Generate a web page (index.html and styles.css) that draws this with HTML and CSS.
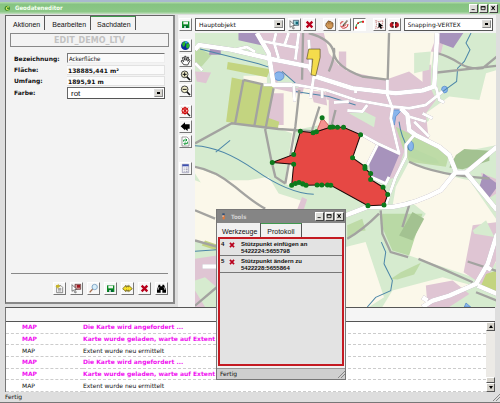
FILE: index.html
```html
<!DOCTYPE html>
<html lang="de">
<head>
<meta charset="utf-8">
<title>Geodateneditor</title>
<link rel="stylesheet" href="styles.css">
</head>
<body>
<svg class="defs" aria-hidden="true">
  <symbol id="i-save" viewBox="0 0 33 33"><path fill="#0a8a22" d="M6 7h22v20H6z"/><path fill="#eef5ee" d="M10 8h14v8H10z"/><path fill="#063" d="M10 20h14v7H10z"/><path fill="#fff" d="M13 21h4v6h-4z"/></symbol>
  <symbol id="i-cross" viewBox="0 0 33 33"><path stroke="#b8001c" stroke-width="7" d="M8 8L25 25M25 8L8 25"/></symbol>
  <symbol id="i-globe" viewBox="0 0 33 33"><circle cx="16" cy="17" r="13" fill="#0b2b9a"/><path fill="#26b52a" d="M6 11q6-8 13-7l-3 7-2 7-5 3zM19 12l7-3 3 8-5 9-6-4z"/><path fill="#39b8e8" d="M14 5l5-1 5 3-6 4z"/></symbol>
  <symbol id="i-hand" viewBox="0 0 33 33"><path fill="#fff" stroke="#222" stroke-width="2.5" d="M11 29L3 18l3-2 5 4-4-12 4-1 4 9-1-12h4l1 12 4-10 3 1-3 12 5-6 2 3-7 14z"/></symbol>
  <symbol id="i-zin" viewBox="0 0 33 33"><path stroke="#111" stroke-width="5" d="M20 20l10 10"/><circle cx="14" cy="13" r="10" fill="#f2eecb" stroke="#222" stroke-width="2.5"/><path stroke="#111" stroke-width="3" d="M8 13h12M14 7v12"/></symbol>
  <symbol id="i-zout" viewBox="0 0 33 33"><path stroke="#111" stroke-width="5" d="M20 20l10 10"/><circle cx="14" cy="13" r="10" fill="#f2eecb" stroke="#222" stroke-width="2.5"/><path stroke="#111" stroke-width="3" d="M8 13h12"/></symbol>
  <symbol id="i-zall" viewBox="0 0 33 33"><path stroke="#222" stroke-width="4" d="M21 21l9 9"/><circle cx="15" cy="14" r="9" fill="#f3bcbc" stroke="#c00" stroke-width="3"/><path stroke="#c00" stroke-width="3" d="M6 5l18 18M24 5L6 23M15 2v24"/></symbol>
  <symbol id="i-back" viewBox="0 0 33 33"><path d="M2 16L15 4v6h14v13h-6v7l-8-6v4z"/></symbol>
  <symbol id="i-refresh" viewBox="0 0 33 33"><path fill="#fff" stroke="#777" stroke-width="2" d="M6 3h15l6 6v21H6z"/><path fill="none" stroke="#159a38" stroke-width="3" d="M11 17v-5h9M17 8l4 4-4 4M22 17v6h-9M16 19l-4 4 4 4"/></symbol>
  <symbol id="i-list" viewBox="0 0 33 33"><path fill="#fff" stroke="#8888a8" stroke-width="2" d="M7 4h19v25H7z"/><path fill="#3d4fae" d="M7 4h19v6H7z"/><path stroke="#668" stroke-width="2" d="M11 15h3M17 15h6M11 20h3M17 20h6M11 25h3M17 25h6"/></symbol>
  <symbol id="i-pick" viewBox="0 0 33 33"><path fill="#9fd5dc" stroke="#345" stroke-width="2" d="M13 4h16v15H13z"/><path fill="#167" d="M20 8h7v8h-7z"/><path stroke="#111" stroke-width="1.5" fill="#fff" d="M3 5l14 14-6 1 5 8-4 2-4-9-5 4z"/></symbol>
  <symbol id="i-pickred" viewBox="0 0 33 33"><path fill="#c99" stroke="#522" stroke-width="2" d="M12 4h17v15H12z"/><path fill="#a01820" d="M18 6h9v8h-9z"/><path stroke="#111" stroke-width="1.5" fill="#fff" d="M3 5l14 14-6 1 5 8-4 2-4-9-5 4z"/></symbol>
  <symbol id="i-grab" viewBox="0 0 33 33"><path fill="#d29a58" stroke="#593311" stroke-width="2" d="M7 12l4-2 1-4h4l1 3 3-2 3 3 4 2v10l-5 7H12L5 20z"/><path stroke="#593311" d="M13 10v6M18 10v6M23 11v5"/></symbol>
  <symbol id="i-pen" viewBox="0 0 33 33"><path fill="none" stroke="#d23030" stroke-width="3" d="M5 16q-2-9 8-8M5 20q3 10 13 7t9-12M8 22q8 2 14-6"/><path stroke="#222" stroke-width="4" d="M12 20L25 5"/><path stroke="#f0d8a0" stroke-width="2" d="M14 18L25 5"/></symbol>
  <symbol id="i-arc" viewBox="0 0 33 33"><path fill="none" stroke="#128a26" stroke-width="3" d="M6 26Q6 9 26 8"/><path fill="#d22" d="M3 23h6v6H3zM24 5h6v6h-6zM10 10h5v5h-5z"/></symbol>
  <symbol id="i-area" viewBox="0 0 33 33"><path fill="#fff" stroke="#a44" stroke-width="2" stroke-dasharray="4 2" d="M5 5l10 3 12-3-3 12 3 10-11-2-11 3 3-12z"/><path d="M14 10l13 11-6 1 3 6-4 2-3-7-4 4z"/></symbol>
  <symbol id="i-snap" viewBox="0 0 33 33"><path fill="#b81522" d="M13 9v17H8q-6-2-6-8t6-9zM18 9h5q7 2 7 9t-7 8h-5z"/><path fill="#222" d="M10 9h4v5h-4zM18 9h4v5h-4zM10 21h4v5h-4zM18 21h4v5h-4z"/></symbol>
  <symbol id="i-new" viewBox="0 0 33 33"><path fill="#fff" stroke="#555" stroke-width="2" d="M8 8h13l5 5v16H8z"/><path stroke="#666" stroke-width="2" d="M12 16h10M12 20h10M12 24h10"/><path fill="#c9b520" d="M5 5l5 2 3-5 2 6 5 2-6 3-2 5-3-5-5-1 3-3z"/></symbol>
  <symbol id="i-find" viewBox="0 0 33 33"><path stroke="#a9704e" stroke-width="4" d="M5 28l9-10"/><circle cx="20" cy="12" r="8" fill="#d8effa" stroke="#87a9c8" stroke-width="3"/></symbol>
  <symbol id="i-swap" viewBox="0 0 33 33"><path fill="#f6df2d" stroke="#554900" stroke-width="2" d="M2 17L12 7v5h3V8l5 4V7l11 10-11 9v-5l-5 4v-4h-3v5z"/></symbol>
  <symbol id="i-bino" viewBox="0 0 33 33"><path d="M8 5h5v5h6V5h5l6 15v9H19v-8h-5v8H3v-9z"/><path stroke="#eee" stroke-width="2" d="M9 12l-3 9M24 12l3 9"/></symbol>
  <symbol id="w-min" viewBox="0 0 9 8"><path d="M2 5h4v1H2z"/></symbol>
  <symbol id="w-max" viewBox="0 0 9 8"><path fill="none" stroke="#000" d="M1.500 1.500h5v4h-5zM1 2h6"/></symbol>
  <symbol id="w-close" viewBox="0 0 9 8"><path stroke="#000" stroke-width="1.300" d="M2 1l4 5M6 1l-4 5"/></symbol>
</svg>

<header class="titlebar">
  <svg class="logo" viewBox="0 0 21 21" aria-hidden="true"><circle cx="10" cy="10" r="8" fill="#3d8d2c"/><path fill="none" stroke="#e9f56a" stroke-width="3" d="M15 6Q9 3 7 9t7 6"/></svg>
  <h1>Geodateneditor</h1>
  <div class="winbtns">
    <button aria-label="Minimieren"><svg><use href="#w-min"/></svg></button>
    <button aria-label="Maximieren"><svg><use href="#w-max"/></svg></button>
    <button aria-label="Schließen"><svg><use href="#w-close"/></svg></button>
  </div>
</header>

<main class="work">
  <section class="panel">
    <nav class="tabs">
      <button>Aktionen</button><button>Bearbeiten</button><button class="active">Sachdaten</button>
    </nav>
    <h2>EDIT_DEMO_LTV</h2>
    <form class="form">
      <label for="bez">Bezeichnung:</label><input id="bez" class="edit" value="Ackerfläche">
      <label for="fl">Fläche:</label><input id="fl" value="138885,441 m²" readonly>
      <label for="um">Umfang:</label><input id="um" value="1895,91 m" readonly>
      <label for="fa">Farbe:</label>
      <span class="combo tall"><select id="fa"><option>rot</option></select><i></i></span>
    </form>
    <div class="actions">
      <button class="tool" aria-label="Neu"><svg><use href="#i-new"/></svg></button>
      <button class="tool" aria-label="Auswählen"><svg><use href="#i-pickred"/></svg></button>
      <button class="tool" aria-label="Lupe"><svg><use href="#i-find"/></svg></button>
      <button class="tool" aria-label="Speichern"><svg><use href="#i-save"/></svg></button>
      <button class="tool" aria-label="Übertragen"><svg><use href="#i-swap"/></svg></button>
      <button class="tool" aria-label="Löschen"><svg><use href="#i-cross"/></svg></button>
      <button class="tool" aria-label="Suchen"><svg><use href="#i-bino"/></svg></button>
    </div>
  </section>

  <section class="mapside">
    <div class="toolbar">
      <button class="tool" aria-label="Karte speichern"><svg><use href="#i-save"/></svg></button>
      <span class="combo"><select aria-label="Objekt"><option>Hauptobjekt</option></select><i></i></span>
      <div class="group">
        <button class="tool" aria-label="Objekt wählen"><svg><use href="#i-pick"/></svg></button>
        <button class="tool" aria-label="Objekt löschen"><svg><use href="#i-cross"/></svg></button>
      </div>
      <div class="group">
        <button class="tool" aria-label="Verschieben"><svg><use href="#i-grab"/></svg></button>
        <button class="tool" aria-label="Zeichnen"><svg><use href="#i-pen"/></svg></button>
        <button class="tool pressed" aria-label="Stützpunkte"><svg><use href="#i-arc"/></svg></button>
      </div>
      <div class="group end">
        <button class="tool" aria-label="Fläche wählen"><svg><use href="#i-area"/></svg></button>
        <button class="tool" aria-label="Snapping"><svg><use href="#i-snap"/></svg></button>
      </div>
      <span class="combo"><select aria-label="Snapping-Modus"><option>Snapping-VERTEX</option></select><i></i></span>
    </div>
    <div class="mapbody">
      <div class="side">
        <div class="stack">
          <button class="tool" aria-label="Gesamtansicht"><svg><use href="#i-globe"/></svg></button>
          <button class="tool" aria-label="Schieben"><svg><use href="#i-hand"/></svg></button>
          <button class="tool" aria-label="Vergrößern"><svg><use href="#i-zin"/></svg></button>
          <button class="tool" aria-label="Verkleinern"><svg><use href="#i-zout"/></svg></button>
        </div>
        <div class="stack">
          <button class="tool" aria-label="Auf Objekt zoomen"><svg><use href="#i-zall"/></svg></button>
          <button class="tool" aria-label="Zurück"><svg><use href="#i-back"/></svg></button>
          <button class="tool" aria-label="Aktualisieren"><svg><use href="#i-refresh"/></svg></button>
        </div>
        <div class="stack last">
          <button class="tool" aria-label="Legende"><svg><use href="#i-list"/></svg></button>
        </div>
      </div>
      <div class="mapview">
      <svg class="map" viewBox="0 0 903 819" preserveAspectRatio="xMinYMin slice" role="img" aria-label="Karte">
        <path fill="#d6ebcf" d="M0 0h903v819H0z"/>
        <g fill="#fbf8ea">
          <path d="M380 0H720L700 150 560 140 460 140 400 60z"/>
          <path d="M235 165L400 175 400 270 300 290 290 460 268 450 290 300 245 285z"/>
          <path d="M690 240L760 190 850 200 870 120 903 110V350L800 355 770 400 740 350 660 300 700 260z"/>
          <path d="M640 385Q760 430 820 440L903 560V680L860 740 640 665 610 650 690 540 640 500 590 520 600 460z"/>
          <path d="M475 300L545 330 515 400 470 370zM145 128h70v22h-70z"/>
          <path d="M160 440L220 430 250 480 330 505 310 530H70L0 420V400L100 440z"/>
          <path d="M0 440L80 470 130 530 65 530V640L0 620zM450 640L510 625 565 790 520 819H450z"/>
          <path d="M590 770L740 730 830 755 690 819H560z"/>
        </g>
        <g fill="#dfc5d3">
          <path d="M185 0H385L400 60 440 110 570 140 640 115 705 165 720 200 690 240 700 330 640 360 560 345 460 285 400 280 400 200 235 165 230 100z"/>
          <path d="M430 55h22v80h-22zM680 95h25v70h-25zM220 180h45v95h-45zM0 115l48 3-15 32-28-5z"/>
          <path d="M550 300L640 310 600 430 575 440 600 350zM830 575l73-10v110l-40 80-60-40zM855 418l48 20v40l-30 20z"/>
          <path d="M0 675L65 665V760L30 730 0 740zM0 770l30 49H0zM690 755l80-15 50 40-60 39h-65zM725 0h25l-15 60-30-5zM320 490l15 8-10 30h-20z"/>
        </g>
        <g fill="#d6ebcf"><path d="M240 120L280 130 310 165 250 155zM655 60l50-5-5 55-45 10zM800 355l103-20v40l-90 30zM460 240l40-8 40 20-5 30zM830 590l40-30 25 50-60-10z"/></g>
        <path fill="#fbf8ea" d="M325 165l65 8 8 60-60 45-40 8 12-60z"/>
        <path fill="#dfc5d3" d="M345 172l45 5 5 40-40-10z"/>
        <path fill="#bedba7" d="M600 280L760 360 750 400 640 385 620 340zM455 575l45-20 10 35-30 5-25 20zM585 735l30-20 60-28-20 35-50 15zM0 40l50 25-30 35-20-5z"/>
        <path fill="#b9d9a5" d="M560 540L680 540 640 665 590 650 555 570zM640 340L720 375 730 390 700 390 640 370z"/>
        <path fill="#a3c291" d="M650 535l35 20-35 65-40-15zM780 365l25-18 75 5v30l-80 25-40-5z"/>
        <path fill="#c3d480" d="M110 133L235 160 210 285 93 265zM98 87L225 108 215 132 95 108zM210 250l42 15-5 22-40-5zM870 720l33-10v70l-50-20zM30 620l35 12v18l-45-15z"/>
        <path fill="#a793bc" d="M545 330L610 365 575 448 525 430 520 385zM730 0h72l-30 45-40-15zM45 45h32v20H42zM185 0l20 38-75-16V0zM862 420l41 30v10l-25 35-30-28z"/>
        <g fill="#88b5ec" stroke="#4a83c8" stroke-width="2"><ellipse cx="251" cy="129" rx="15" ry="13"/><ellipse cx="645" cy="338" rx="8" ry="14"/><ellipse cx="746" cy="169" rx="9" ry="10"/><path d="M590 230h28l-18 20-4 25h-8zM805 819l5-12 14 12z"/></g>
        <path class="water" d="M15 48L110 72 190 92 230 105M260 115L300 150M0 337Q80 340 180 410T355 482M62 356L105 321M825 0L810 30 822 50 805 85 785 105 782 145 740 175M610 265Q615 310 640 350M557 625L570 655 565 690 590 740 585 770 540 790 515 819M300 175L400 190 480 215M0 652l65-4"/>
        <g class="rail">
          <path d="M340 0Q410 20 415 60T500 130L580 140M415 45Q420 70 400 115M580 0L576 140M323 0L320 140"/>
          <path d="M724 118L903 98M724 60Q760 70 790 90T860 105L903 70M640 385Q720 425 880 435"/>
          <path d="M0 330L110 270 250 287 370 295M145 140L120 270M145 140L200 153 178 275M235 165L210 290 228 380 240 430 270 450M312 170L300 280 270 450M372 220L350 290M420 230L405 290"/>
          <path d="M0 400Q60 410 120 460T210 525M0 530L60 555M0 620L70 640M0 815L65 760M550 540Q500 590 455 615M555 530L560 600 585 655 637 670M668 675L740 705 830 745M640 515L620 580M815 683L903 712M840 775L903 800"/>
        </g>
        <g class="road">
          <path d="M0 50L12 36 110 50 215 75 340 100 360 130 470 165 600 180 680 172 715 160 724 0M185 0L220 60 235 155 290 155"/>
          <path class="w2" d="M120 50L155 42 180 57M205 155L300 155 390 170 480 200 590 220 640 225 690 215 740 175M205 25L310 45M242 0L235 30M280 0L268 35M310 0L300 80M235 25L250 75M340 20L345 100"/>
          <path class="w2" d="M575 140V185L590 225 585 255 605 340 610 360 545 330 500 305M355 130L345 195M295 155L298 205M380 170V195M480 165V180M415 208L460 205M455 232L500 235 515 215M640 250L690 265M680 240L710 255M655 265L700 310M720 160L730 200 745 208M0 90L22 112"/>
          <path d="M615 225L635 245 640 290 660 305 730 340 760 365 780 415 735 470Q660 510 590 520L515 520 450 545M780 417H810L903 340M810 417L903 530"/>
          <path class="w2" d="M655 305L630 335 630 370 600 430 570 515M545 335L512 400M525 430L570 450 580 430"/>
          <path d="M903 600L875 690 840 750 760 785 710 800 680 819M845 755L903 780M22 698H65M680 790L695 800M865 695L885 708"/>
        </g>
        <path fill="#f4dc4c" stroke="#554c22" stroke-width="2" d="M340 48h34v25l-13 55-14-3 5-47h-18z"/>
        <path fill="#f69290" stroke="#b33" stroke-width="2" d="M363 295L380 253 404 282z"/>
        <path fill="#e64844" stroke="#1b0808" stroke-width="3" d="M315 294L353 298 363 295 404 282 444 282 495 304 471 373 508 399 508 405 525 420 525 438 562 461 576 483 565 514 517 516 406 455 396 454 379 454 365 454 332 455 311 447 289 455 295 392 231 387 295 363z"/>
        <path class="nodes" d="M315 294h0M353 298h0M363 295h0M380 253h0M404 282h0M412 281h0M426 282h0M444 282h0M495 304h0M471 373h0M508 399h0M508 405h0M525 420h0M525 438h0M562 461h0M576 483h0M565 514h0M517 516h0M406 455h0M396 454h0M379 454h0M365 454h0M332 455h0M322 451h0M311 447h0M300 450h0M289 455h0M295 392h0M231 387h0M295 363h0"/>
      </svg>
      </div>
    </div>
  </section>
</main>

<section class="log">
  <div class="loghead"></div>
  <div class="logbody">
    <table>
      <tr class="hot"><td>MAP</td><td>Die Karte wird angefordert ...</td></tr>
      <tr class="hot"><td>MAP</td><td>Karte wurde geladen, warte auf Extent</td></tr>
      <tr><td>MAP</td><td>Extent wurde neu ermittelt</td></tr>
      <tr class="hot"><td>MAP</td><td>Die Karte wird angefordert ...</td></tr>
      <tr class="hot"><td>MAP</td><td>Karte wurde geladen, warte auf Extent</td></tr>
      <tr><td>MAP</td><td>Extent wurde neu ermittelt</td></tr>
    </table>
    <div class="scroll">
      <button class="up" aria-label="Nach oben"></button>
      <span class="thumb"></span>
      <button class="down" aria-label="Nach unten"></button>
    </div>
  </div>
</section>
<footer class="status">Fertig<svg class="grip" viewBox="0 0 8 8" aria-hidden="true"><path d="M1 8L8 1M4 8L8 4"/></svg></footer>

<aside class="tools">
  <header>
    <svg class="logo" viewBox="0 0 21 21" aria-hidden="true"><path fill="#2f4f78" d="M7 1h7v6H7z"/><path fill="#e87633" d="M8 7h6v12H8z"/><path fill="#fff" d="M8 7h2v5H8z"/></svg>
    <h2>Tools</h2>
    <div class="winbtns">
      <button aria-label="Minimieren"><svg><use href="#w-min"/></svg></button>
      <button aria-label="Maximieren"><svg><use href="#w-max"/></svg></button>
      <button aria-label="Schließen"><svg><use href="#w-close"/></svg></button>
    </div>
  </header>
  <nav class="tabs"><button>Werkzeuge</button><button class="active">Protokoll</button></nav>
  <ol>
    <li><b>4</b><button aria-label="Eintrag 4 löschen"><svg><use href="#i-cross"/></svg></button><p>Stützpunkt einfügen an<br>5422224:5655798</p></li>
    <li><b>5</b><button aria-label="Eintrag 5 löschen"><svg><use href="#i-cross"/></svg></button><p>Stützpunkt ändern zu<br>5422228:5655864</p></li>
  </ol>
  <footer>Fertig<svg class="grip" viewBox="0 0 8 8" aria-hidden="true"><path d="M1 8L8 1M4 8L8 4"/></svg></footer>
</aside>
</body>
</html>
```
FILE: styles.css
```css
* { box-sizing: border-box; margin: 0; padding: 0; }

body {
  display: flex;
  flex-direction: column;
  height: 100vh;
  overflow: hidden;
  background: #dedede;
  border-bottom: 1px solid #777;
  color: #111;
  font: 6px/8px "DejaVu Sans", sans-serif;
}

button, input, select { font: inherit; color: inherit; border: 0; background: none; appearance: none; border-radius: 0; }
svg { display: block; }
.defs { position: absolute; width: 0; height: 0; }

/* Title bars */
.titlebar {
  display: flex;
  align-items: center;
  height: 14px;
  flex: none;
  padding: 0 2px 0 4px;
  border-top: 2px solid #a9b9cf;
  background: linear-gradient(#b4dcae, #86c382 20%, #8cc887 80%, #c3dfc0);
}
.logo { width: 7px; height: 7px; }
h1, h2 { font: bold 6px/8px "DejaVu Sans Condensed", "DejaVu Sans", sans-serif; }
.titlebar h1 { margin-left: 4px; color: #f4fff0; }
.winbtns { display: flex; gap: 1px; margin-left: auto; }
.winbtns button {
  width: 9px;
  height: 9px;
  background: #dcdcd8;
  border: 1px solid;
  border-color: #fff #444 #444 #fff;
}
.winbtns svg { width: 100%; height: 100%; }

/* Work area */
.work {
  flex: 1;
  min-height: 0;
  display: grid;
  grid-template-columns: 170fr 318fr;
  gap: 3px;
  padding: 1px 4px 0 5px;
}
.panel {
  display: flex;
  flex-direction: column;
  margin-bottom: 3px;
  background: #f3f3f3;
  border: 1px solid #666;
  border-right: 2px solid #888;
  border-bottom: 2px solid #888;
}
.tabs { display: flex; height: 14px; }
.tabs button {
  height: 14px;
  padding: 3px 4px 0 7px;
  border-right: 1px solid #555;
  font: 7px/9px "Liberation Sans", sans-serif;
}
.tabs .active { border-top: 1px solid #3f9a4e; padding: 2px 4px 0 6px; }
.panel h2 {
  margin: 3px 4px 6px;
  height: 14px;
  border: 1px solid #888;
  color: #c2c2c2;
  font: bold 8px/13px "DejaVu Sans", sans-serif;
  text-align: center;
}
.form {
  display: grid;
  grid-template-columns: 53px 1fr;
  row-gap: 1px;
  align-items: center;
  padding: 0 8px;
}
.form label { font-weight: bold; }
.form input {
  width: 100%;
  min-width: 0;
  height: 10px;
  padding-left: 1px;
  background: #fbfbfb;
  border: 1px solid #e2e2e2;
  border-left: 0;
  font-weight: bold;
}
.form .edit {
  margin-bottom: 1px;
  border: 1px solid;
  border-color: #777 #eee #eee #777;
  font: 6px/8px "DejaVu Sans Condensed", sans-serif;
}

/* Drop-downs */
.combo {
  display: flex;
  flex: 1;
  align-items: center;
  height: 13px;
  padding: 1px;
  background: #fff;
  border: 1px solid;
  border-color: #666 #555 #555 #666;
}
.combo select { flex: 1; min-width: 0; height: 9px; padding-left: 2px; line-height: 9px; background: #fff; }
.combo i {
  width: 9px;
  height: 8px;
  background: #d8d6d0 linear-gradient(#000, #000) center / 3px 2px no-repeat;
  border: 1px solid;
  border-color: #ddd #888 #888 #ddd;
}
.tall { height: 12px; }
.tall select { font: 8px/9px "Liberation Sans", sans-serif; }

/* Icon buttons */
.tool {
  flex: none;
  width: 13px;
  height: 13px;
  background: #f7f7f7;
  border: 1px solid;
  border-color: #fff #777 #777 #fff;
}
.tool svg { width: 11px; height: 11px; }
.pressed { background: #fff; border-color: #777 #fff #fff #777; }
.actions {
  display: flex;
  justify-content: flex-end;
  gap: 4px;
  margin: auto 5px 7px;
  padding-top: 8px;
  border-top: 1px solid #888;
}

/* Map side */
.mapside { display: flex; flex-direction: column; min-width: 0; min-height: 0; background: #f3f3f3; }
.toolbar { display: flex; align-items: center; gap: 3px; height: 18px; padding: 0 3px 0 1px; }
.group { display: flex; gap: 2px; margin-right: 4px; }
.end { margin-right: 0; }
.mapbody { display: flex; flex: 1; min-height: 0; }
.side { display: flex; flex-direction: column; gap: 8px; flex: none; width: 17px; padding: 6px 0 0 1px; }
.stack { display: flex; flex-direction: column; gap: 2px; }
.last { margin-top: 6px; }
.mapview { flex: 1; min-width: 0; overflow: hidden; }
.map { width: 100%; height: 100%; fill: none; }
.water { stroke: #4c86a8; stroke-width: 3; }
.rail { stroke: #a3a3a0; stroke-width: 7; }
.road { stroke: #fff; stroke-width: 14; stroke-linejoin: round; filter: drop-shadow(0 0 2px #998fa0); }
.w2 { stroke-width: 9; }
.nodes { stroke: #0c7a1c; stroke-width: 15; stroke-linecap: round; }

/* Message log */
.log { display: flex; flex-direction: column; flex: none; height: 85px; margin: 0 5px; border-top: 1px solid #555; border-left: 1px solid #777; }
.loghead { height: 14px; flex: none; background: #f5f5f5; border-bottom: 1px solid #555; }
.logbody { display: flex; flex: 1; min-height: 0; background: #fff; }
table { flex: 1; height: 100%; border-collapse: collapse; table-layout: fixed; }
td { border-bottom: 1px dashed #ccc; vertical-align: middle; }
td:first-child { width: 77px; padding-left: 16px; }
.hot { color: #f010f0; font-weight: bold; }
.scroll { display: flex; flex-direction: column; width: 9px; background: #eceae6; }
.scroll button, .thumb { height: 9px; background: #d6d3cc; border: 1px solid; border-color: #fff #555 #555 #fff; }
.thumb { height: 6px; margin-top: auto; }
.up::before, .down::before { content: ""; display: block; width: 0; margin: 0 auto; border: 2px solid transparent; }
.up::before { border-top: 0; border-bottom: 3px solid #000; }
.down::before { border-bottom: 0; border-top: 3px solid #000; }

.status { display: flex; align-items: center; flex: none; height: 10px; padding-left: 5px; }
.grip { width: 8px; height: 8px; margin-left: auto; stroke: #888; fill: none; }

/* Floating tool window */
.tools {
  position: absolute;
  left: 216px;
  top: 209px;
  width: 130px;
  height: 171px;
  display: flex;
  flex-direction: column;
  background: #f1f1f1;
  border: 1px solid #777;
}
.tools header { display: flex; align-items: center; flex: none; height: 13px; padding: 0 1px 0 3px; background: #858585; }
.tools header h2 { margin-left: 4px; color: #d0d0d0; }
.tools .tabs { flex: none; }
.tools .tabs button { padding: 3px 3px 0 5px; }
.tools .tabs .active { padding: 2px 6px 0 6px; }
.tools ol { flex: 1; margin: 0 1px 2px; border: 2px solid #c41a22; background: #e3e3e3; list-style: none; }
.tools li { display: flex; height: 17px; padding-top: 2px; border-bottom: 1px solid #777; font: bold 6px/7px "Liberation Sans", sans-serif; }
.tools li b { width: 8px; padding-left: 1px; }
.tools li button { width: 8px; height: 8px; margin-right: 5px; }
.tools li svg { width: 8px; height: 8px; }
.tools footer { display: flex; align-items: center; flex: none; height: 11px; padding-left: 3px; background: #cfcfcf; border-top: 1px solid #999; }
```
